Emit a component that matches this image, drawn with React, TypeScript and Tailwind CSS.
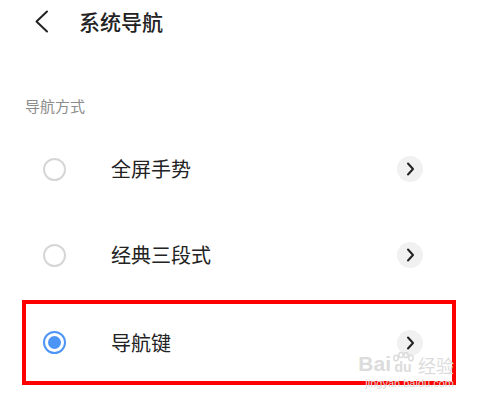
import React from "react";

const options = [
  {label: "全屏手势", checked: false},
  {label: "经典三段式", checked: false},
];

function Radio({checked}: {checked: boolean}) {
  if (checked) {
    return (
      <span className="flex h-[23px] w-[23px] items-center justify-center rounded-full border-2 border-[#4d94f7]">
        <span className="h-[13px] w-[13px] rounded-full bg-[#4d94f7]"></span>
      </span>
    );
  }
  return <span className="block h-[23px] w-[23px] rounded-full border-2 border-[#d6d6d6]"></span>;
}

function ChevronButton() {
  return (
    <span className="flex h-[26px] w-[26px] items-center justify-center rounded-full bg-[#f1f1f1]">
      <svg width="9" height="14" viewBox="0 0 9 14" fill="none">
        <path d="M2 1.5 L7 7 L2 12.5" stroke="#222" strokeWidth="2" strokeLinecap="round" strokeLinejoin="round" />
      </svg>
    </span>
  );
}

export default function App() {
  return (
    <div className="relative h-[400px] w-[478px] overflow-hidden bg-white font-['Noto_Sans_CJK_SC',sans-serif] text-[#222]">
      {/* Header */}
      <div className="flex h-[42px] items-center pl-[34px]">
        <svg width="15" height="23" viewBox="0 0 15 23" fill="none">
          <path d="M13 1.5 L2.5 11.5 L13 21.5" stroke="#222" strokeWidth="2" strokeLinecap="round" strokeLinejoin="round" />
        </svg>
        <span className="ml-[30px] text-[21px] font-medium leading-none">系统导航</span>
      </div>

      {/* Section label */}
      <div className="mt-[54px] pl-[25px] text-[15px] leading-[20px] text-[#8c8c8c]">导航方式</div>

      {/* Options */}
      <div className="mt-[10px] flex flex-col">
        {options.map((o) => (
          <div key={o.label} className="flex h-[86px] items-center justify-between pl-[43px] pr-[55px]">
            <div className="flex items-center gap-[45px]">
              <Radio checked={o.checked} />
              <span className="text-[20px] leading-none">{o.label}</span>
            </div>
            <ChevronButton />
          </div>
        ))}

        {/* Selected row, boxed in red */}
        <div className="mx-[22px] mt-[2px] flex h-[85px] items-center justify-between border-[4px] border-[#ff0000] pl-[17px] pr-[29px]">
          <div className="flex items-center gap-[45px]">
            <Radio checked={true} />
            <span className="text-[20px] leading-none">导航键</span>
          </div>
          <ChevronButton />
        </div>
      </div>

      {/* Baidu watermark */}
      <div className="absolute right-[24px] top-[352px] flex flex-col items-end text-[#dcdcdc]">
        <div className="flex h-[22px] items-end font-['Liberation_Sans',sans-serif] text-[21px] font-bold leading-none">
          <span>Bai</span>
          <span className="relative flex h-[22px] w-[24px] items-end justify-center">
            <svg className="absolute left-0 top-0" width="24" height="22" viewBox="0 0 24 22" fill="none" stroke="#dcdcdc" strokeWidth="1.5">
              <ellipse cx="5" cy="6" rx="2.2" ry="2.8" />
              <ellipse cx="10" cy="3" rx="2.2" ry="2.6" />
              <ellipse cx="15" cy="3" rx="2.2" ry="2.6" />
              <ellipse cx="20" cy="6" rx="2.2" ry="2.8" />
            </svg>
            <span className="relative text-[14px] leading-none">du</span>
          </span>
          <span className="ml-[3px] font-['Noto_Sans_CJK_SC',sans-serif] text-[18px] font-normal leading-none">经验</span>
        </div>
        <div className="mt-[4px] font-['Liberation_Sans',sans-serif] text-[11px] leading-none">jingyan.baidu.com</div>
      </div>
    </div>
  );
}
